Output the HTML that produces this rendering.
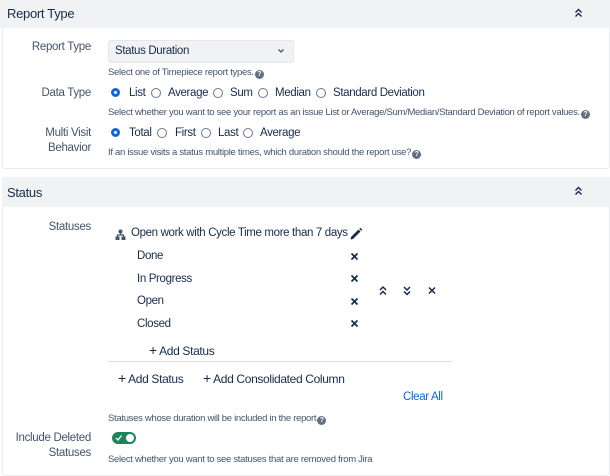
<!DOCTYPE html>
<html><head><style>
body{margin:0;width:610px;height:476px;background:#fff;font-family:"Liberation Sans",sans-serif;color:#172b4d;position:relative;overflow:hidden}
.a{position:absolute;white-space:nowrap}
.t{font-size:11.5px;letter-spacing:-0.35px}
.h{font-size:9.5px;color:#44546f;letter-spacing:-0.3px}
.l{font-size:11.5px;color:#44546f;text-align:right;width:91px;left:0;letter-spacing:-0.3px;line-height:15px}
.hd{background:#f1f2f4;font-size:13px;color:#172b4d;letter-spacing:-0.3px}
.r{width:8px;height:8px;border:1.3px solid #6b778c;border-radius:50%;box-sizing:content-box}
.r.on{border:3.5px solid #0c66e4;width:3px;height:3px}
.q{display:inline-block;width:9px;height:9px;border-radius:50%;background:#626f86;color:#fff;font-size:7px;text-align:center;line-height:9px;font-weight:bold;vertical-align:-1px;margin-left:1px}
</style></head><body>
<div class="a" style="left:2px;top:0;width:606px;height:168px;border:1px solid #ebecf0;border-top:none;border-radius:3px"></div>
<div class="a hd" style="left:0;top:0;width:610px;height:28px"></div>
<div class="a hd" style="left:7px;top:6px">Report Type</div>
<svg class="a" style="left:574px;top:8px" width="9" height="10" viewBox="0 0 9 10"><path d="M1.5 4.5 4.5 1.5 7.5 4.5M1.5 8.5 4.5 5.5 7.5 8.5" fill="none" stroke="#172b4d" stroke-width="1.4"/></svg>

<div class="a l" style="top:40px">Report Type</div>
<div class="a" style="left:108px;top:40px;width:186px;height:23px;background:#f1f2f4;border:1px solid #e4e6ea;border-radius:3px;box-sizing:border-box"></div>
<div class="a t" style="left:115px;top:45px;color:#172b4d">Status Duration</div>
<svg class="a" style="left:277px;top:48px" width="8" height="6"><path d="M1.5 1.5 4 4 6.5 1.5" fill="none" stroke="#44546f" stroke-width="1.3"/></svg>
<div class="a h" style="left:108px;top:67px">Select one of Timepiece report types.<span class="q">?</span></div>

<div class="a l" style="top:86px">Data Type</div>
<div class="a r on" style="left:111px;top:88px"></div><div class="a t" style="left:129px;top:87px">List</div>
<div class="a r" style="left:151px;top:88px"></div><div class="a t" style="left:168px;top:87px">Average</div>
<div class="a r" style="left:213px;top:88px"></div><div class="a t" style="left:230px;top:87px">Sum</div>
<div class="a r" style="left:258px;top:88px"></div><div class="a t" style="left:275px;top:87px">Median</div>
<div class="a r" style="left:316px;top:88px"></div><div class="a t" style="left:333px;top:87px">Standard Deviation</div>
<div class="a h" style="left:108px;top:107px">Select whether you want to see your report as an issue List or Average/Sum/Median/Standard Deviation of report values.<span class="q">?</span></div>

<div class="a l" style="top:126px">Multi Visit<br>Behavior</div>
<div class="a r on" style="left:111px;top:128px"></div><div class="a t" style="left:129px;top:127px">Total</div>
<div class="a r" style="left:157px;top:128px"></div><div class="a t" style="left:175px;top:127px">First</div>
<div class="a r" style="left:201px;top:128px"></div><div class="a t" style="left:218px;top:127px">Last</div>
<div class="a r" style="left:243px;top:128px"></div><div class="a t" style="left:260px;top:127px">Average</div>
<div class="a h" style="left:108px;top:147px">If an issue visits a status multiple times, which duration should the report use?<span class="q">?</span></div>

<div class="a" style="left:2px;top:177px;width:606px;height:297px;border:1px solid #ebecf0;border-radius:3px"></div>
<div class="a hd" style="left:2px;top:177px;width:608px;height:30px"></div>
<div class="a hd" style="left:7px;top:185px">Status</div>
<svg class="a" style="left:574px;top:186px" width="9" height="10" viewBox="0 0 9 10"><path d="M1.5 4.5 4.5 1.5 7.5 4.5M1.5 8.5 4.5 5.5 7.5 8.5" fill="none" stroke="#172b4d" stroke-width="1.4"/></svg>

<div class="a l" style="top:220px">Statuses</div>
<svg class="a" style="left:115px;top:229px" width="11" height="11" viewBox="0 0 11 11"><circle cx="5.5" cy="2.5" r="2" fill="#44546f"/><path d="M5.5 4V6M2.5 8V6H8.5V8" stroke="#44546f" stroke-width="1.3" fill="none"/><rect x="0.5" y="7.5" width="4" height="3.5" fill="#44546f"/><rect x="6.5" y="7.5" width="4" height="3.5" fill="#44546f"/></svg>
<div class="a t" style="left:131px;top:227px">Open work with Cycle Time more than 7 days</div>
<svg class="a" style="left:349px;top:227px" width="14" height="14" viewBox="0 0 14 14"><path d="M2 10 9.5 2.5 11.5 4.5 4 12 1.5 12.5Z" fill="#172b4d"/><path d="M10.3 1.7 11.3 0.7 13.3 2.7 12.3 3.7Z" fill="#172b4d"/></svg>

<div class="a t" style="left:137px;top:250px">Done</div>
<div class="a t" style="left:137px;top:273px">In Progress</div>
<div class="a t" style="left:137px;top:295px">Open</div>
<div class="a t" style="left:137px;top:318px">Closed</div>
<svg class="a" style="left:350px;top:252px" width="10" height="80"><g stroke="#172b4d" stroke-width="1.7"><path d="M1.5 1.5 7.5 7.5M7.5 1.5 1.5 7.5"/><path d="M1.5 23.5 7.5 29.5M7.5 23.5 1.5 29.5"/><path d="M1.5 46.5 7.5 52.5M7.5 46.5 1.5 52.5"/><path d="M1.5 68.5 7.5 74.5M7.5 68.5 1.5 74.5"/></g></svg>
<svg class="a" style="left:378px;top:285px" width="60" height="12"><g stroke="#172b4d" stroke-width="1.5" fill="none"><path d="M2 5 5 2 8 5M2 9.5 5 6.5 8 9.5"/><path d="M26 2 29 5 32 2M26 6.5 29 9.5 32 6.5"/><path d="M51 2.5 57 8.5M57 2.5 51 8.5"/></g></svg>

<div class="a t" style="left:149px;top:344px;font-size:12px"><span style="font-size:14px;line-height:10px">+</span> Add Status</div>
<div class="a" style="left:108px;top:361px;width:344px;height:1px;background:#dcdfe4"></div>
<div class="a t" style="left:118px;top:370px;font-size:12px"><span style="font-size:14px">+</span> Add Status</div>
<div class="a t" style="left:203px;top:370px;font-size:12px"><span style="font-size:14px">+</span> Add Consolidated Column</div>
<div class="a t" style="left:403px;top:391px;color:#0c66e4">Clear All</div>
<div class="a h" style="left:108px;top:413px">Statuses whose duration will be included in the report<span class="q">?</span></div>

<div class="a l" style="top:431px">Include Deleted<br>Statuses</div>
<div class="a" style="left:112px;top:432px;width:24px;height:12px;border-radius:6px;background:#1f845a"></div>
<div class="a" style="left:126px;top:434px;width:8px;height:8px;border-radius:50%;background:#fff"></div>
<svg class="a" style="left:115px;top:434px" width="8" height="8"><path d="M1 4 3 6 6.5 1.5" stroke="#fff" stroke-width="1.3" fill="none"/></svg>
<div class="a h" style="left:108px;top:454px">Select whether you want to see statuses that are removed from Jira</div>
</body></html>
